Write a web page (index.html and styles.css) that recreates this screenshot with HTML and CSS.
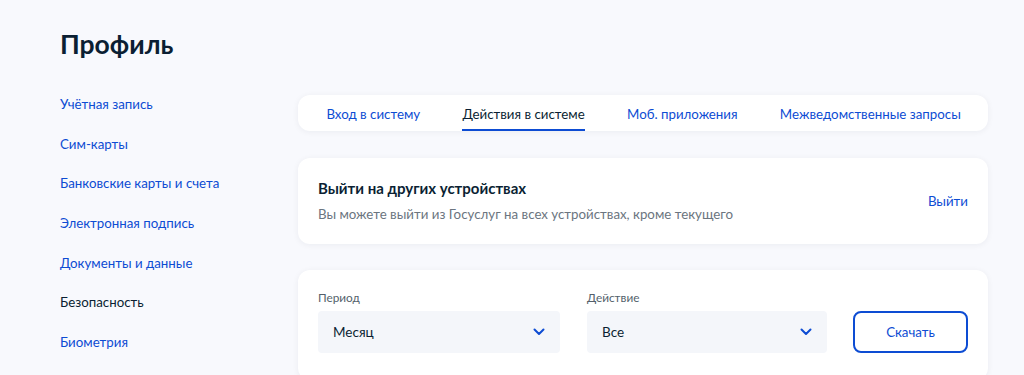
FILE: index.html
```html
<!DOCTYPE html>
<html lang="ru">
<head>
<meta charset="utf-8">
<title>Профиль</title>
<link rel="stylesheet" href="styles.css">
</head>
<body>
<div class="page">
  <h1 class="title">Профиль</h1>
  <div class="layout">
    <nav class="sidebar">
      <a class="side-link">Учётная запись</a>
      <a class="side-link">Сим-карты</a>
      <a class="side-link">Банковские карты и счета</a>
      <a class="side-link">Электронная подпись</a>
      <a class="side-link">Документы и данные</a>
      <a class="side-link active">Безопасность</a>
      <a class="side-link">Биометрия</a>
    </nav>
    <main class="content">
      <div class="tabs card">
        <span class="tab">Вход в систему</span>
        <span class="tab active">Действия в системе</span>
        <span class="tab">Моб. приложения</span>
        <span class="tab">Межведомственные запросы</span>
      </div>
      <div class="card logout">
        <div class="logout-text">
          <div class="logout-title">Выйти на других устройствах</div>
          <div class="logout-sub">Вы можете выйти из Госуслуг на всех устройствах, кроме текущего</div>
        </div>
        <a class="link">Выйти</a>
      </div>
      <div class="card filters">
        <div class="field field-period">
          <div class="label">Период</div>
          <div class="select"><span>Месяц</span>
            <svg class="chev" width="12" height="8" viewBox="0 0 12 8"><path d="M1.5 1.5 6 6l4.5-4.5" fill="none" stroke="#0d4cd3" stroke-width="2" stroke-linecap="round" stroke-linejoin="round"/></svg>
          </div>
        </div>
        <div class="field field-action">
          <div class="label">Действие</div>
          <div class="select"><span>Все</span>
            <svg class="chev" width="12" height="8" viewBox="0 0 12 8"><path d="M1.5 1.5 6 6l4.5-4.5" fill="none" stroke="#0d4cd3" stroke-width="2" stroke-linecap="round" stroke-linejoin="round"/></svg>
          </div>
        </div>
        <button class="btn">Скачать</button>
      </div>
    </main>
  </div>
</div>
</body>
</html>
```

FILE: styles.css
```css
* { box-sizing: border-box; }
html, body { margin: 0; padding: 0; }
body {
  background: #f8f9fd;
  font-family: Lato, "Noto Sans", "Liberation Sans", sans-serif;
  color: #0b1f33;
  height: 375px;
  overflow: hidden;
}
.page { padding: 28px 0 0 60px; }
.title {
  margin: 0;
  font-size: 26.5px;
  line-height: 32px;
  font-weight: 700;
  color: #0b1f33;
  height: 66px;
}
.layout { display: flex; }
.sidebar {
  width: 238px;
  display: flex;
  flex-direction: column;
  gap: 19.7px;
}
.side-link {
  font-size: 13.3px;
  line-height: 20px;
  color: #0d4cd3;
  white-space: nowrap;
}
.side-link.active { color: #0b1f33; }
.content {
  width: 690px;
  display: flex;
  flex-direction: column;
  gap: 27px;
  padding-top: 1px;
}
.card {
  background: #fff;
  border-radius: 12px;
  box-shadow: 0 1px 6px rgba(11, 31, 51, 0.06);
}
.tabs {
  display: flex;
  gap: 42.3px;
  padding: 0 28.5px;
  height: 36px;
}
.tab {
  font-size: 13.3px;
  line-height: 20px;
  padding-top: 9px;
  height: 36px;
  color: #0d4cd3;
  white-space: nowrap;
  border-bottom: 2px solid transparent;
}
.tab.active {
  color: #0b1f33;
  border-bottom-color: #0d4cd3;
}
.logout {
  display: flex;
  align-items: center;
  justify-content: space-between;
  padding: 20px;
  height: 86px;
}
.logout-title {
  font-size: 15px;
  line-height: 20px;
  font-weight: 700;
}
.logout-sub {
  margin-top: 6px;
  font-size: 13.3px;
  line-height: 20px;
  color: #6b7580;
}
.link {
  font-size: 13.3px;
  line-height: 20px;
  color: #0d4cd3;
}
.filters {
  display: flex;
  align-items: flex-start;
  padding: 20px;
  margin-top: -1px;
  gap: 27px;
  height: 110px;
}
.field-period { width: 242px; }
.field-action { width: 240px; }
.label {
  font-size: 11.8px;
  line-height: 16px;
  color: #535f6b;
  margin-bottom: 5px;
}
.select {
  height: 42px;
  background: #f4f6fa;
  border-radius: 4px;
  display: flex;
  align-items: center;
  justify-content: space-between;
  padding: 0 15px;
  font-size: 13.5px;
  color: #0b1f33;
}
.chev { display: block; }
.btn {
  margin-top: 21px;
  margin-left: -1px;
  width: 115px;
  height: 42px;
  background: #fff;
  border: 2px solid #0d4cd3;
  border-radius: 8px;
  color: #0d4cd3;
  font-family: inherit;
  font-size: 13.3px;
}
```
